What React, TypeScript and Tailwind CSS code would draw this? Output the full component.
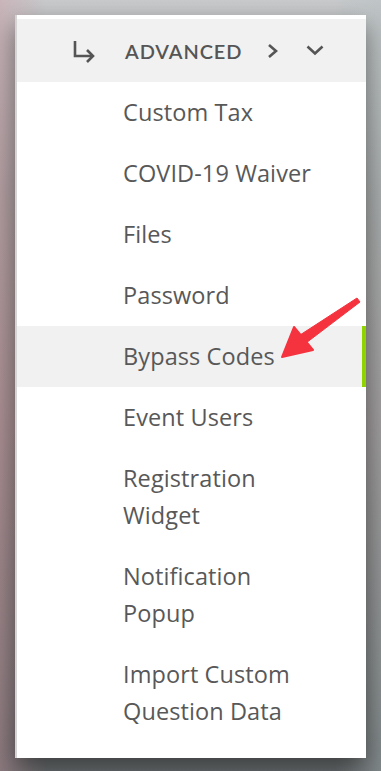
import React from "react";

const items: { label: string; active?: boolean }[] = [
  { label: "Custom Tax" },
  { label: "COVID-19 Waiver" },
  { label: "Files" },
  { label: "Password" },
  { label: "Bypass Codes", active: true },
  { label: "Event Users" },
  { label: "Registration Widget" },
  { label: "Notification Popup" },
  { label: "Import Custom Question Data" },
];

const CornerIcon = () => (
  <svg width="26" height="22" viewBox="0 0 26 22" fill="none" stroke="#555" strokeWidth="2.6" strokeLinecap="butt" strokeLinejoin="miter">
    <path d="M3 0v15h18" />
    <path d="M15 9l6 6-6 6" />
  </svg>
);

export default function App() {
  return (
    <div className="relative w-[381px] h-[771px] overflow-hidden bg-[linear-gradient(180deg,#c9cbcd_0%,#a9a8a8_25%,#9a8f90_55%,#7b7b7c_85%,#6a6e70_100%)]">
      <div className="absolute inset-0 bg-[linear-gradient(90deg,rgba(200,140,150,0.35)_0%,rgba(200,140,150,0)_12%,rgba(0,0,0,0)_88%,rgba(170,185,185,0.35)_100%)]" />
      <div className="relative mt-[15px] ml-[15px] w-[351px] bg-white border-l-2 border-[#d4d4d4] shadow-[0_10px_24px_rgba(0,0,0,0.45)] pt-[4px] pb-[16px] font-['Open_Sans',sans-serif]">
        <div className="flex items-center h-[63px] bg-[#f1f1f1] text-[#555]">
          <div className="ml-[55px] mt-[2px]">
            <CornerIcon />
          </div>
          <span className="ml-[27px] text-[20px] font-semibold tracking-[0.9px] font-['Lato',sans-serif]">ADVANCED</span>
          <svg className="ml-[25px]" width="12" height="14" viewBox="0 0 12 14" fill="none" stroke="#555" strokeWidth="2.6">
            <path d="M2 1l7 6-7 6" />
          </svg>
          <svg className="ml-[27px]" width="18" height="11" viewBox="0 0 18 11" fill="none" stroke="#555" strokeWidth="2.6">
            <path d="M1.5 1.5l7.5 7 7.5-7" />
          </svg>
        </div>
        <ul>
          {items.map((it) => (
            <li
              key={it.label}
              className={`relative py-[12px] pl-[106px] pr-[50px] text-[23.5px] leading-[37px] tracking-[0.1px] text-[#585858] ${it.active ? "bg-[#f1f1f1]" : ""}`}
            >
              {it.label}
              {it.active && <span className="absolute right-0 top-0 bottom-0 w-[4px] bg-[#8fd400]" />}
            </li>
          ))}
        </ul>
      </div>
      <svg className="absolute left-0 top-0" width="381" height="771" viewBox="0 0 381 771">
        <path d="M357 298 L360 302 L306 343 L300 335 Z" fill="#f5333f" stroke="#f5333f" strokeWidth="1" strokeLinejoin="round" />
        <path d="M282 357 L294 327 L313 350 Z" fill="#f5333f" stroke="#f5333f" strokeWidth="2" strokeLinejoin="round" />
      </svg>
    </div>
  );
}
